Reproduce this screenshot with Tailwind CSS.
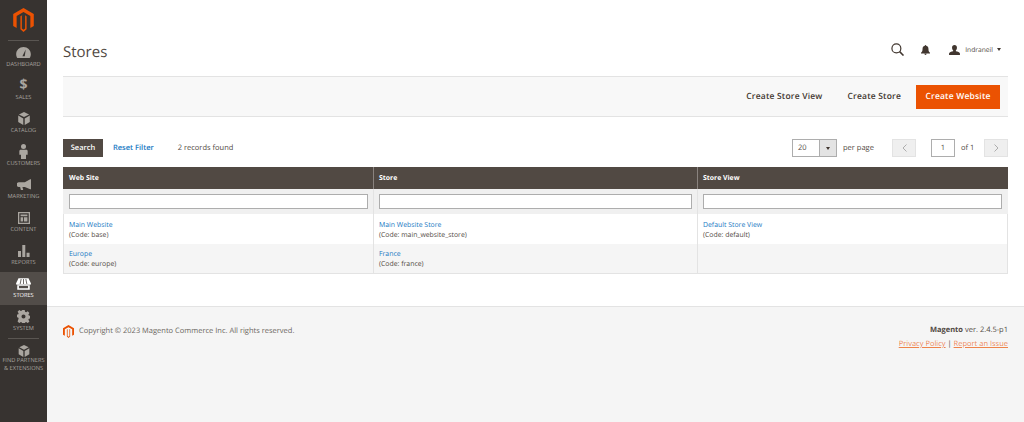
<!DOCTYPE html>
<html lang="en">
<head>
    <meta charset="UTF-8">
    <title>Stores</title>
    <script src="https://cdn.jsdelivr.net/npm/@tailwindcss/browser@4"></script>
</head>
<body class="bg-white font-['Open_Sans',sans-serif] [text-rendering:geometricPrecision] text-[#514943] overflow-hidden">
<div class="flex h-[422px] w-[1024px]">
    <!-- Sidebar -->
    <aside class="w-[47px] shrink-0 bg-[#373330] text-[#aaa6a0] text-[5.700px] leading-[8px] uppercase text-center">
        <div class="h-[41px] flex items-center justify-center border-b border-[#5a5652] mx-[8px]">
            <svg class="w-[21px] h-[24px]" viewBox="0 0 24 28"><path fill="#eb5202" d="M12 0 0 7v14l4 2.300V9.300L12 4.600l8 4.700v14l4-2.300V7z"/><path fill="#eb5202" d="M12 7.500 8.400 9.600v15.200L12 28l3.600-3.200V9.600l-1.700-1V24L12 25.400 10.100 24V8.600z"/></svg>
        </div>
        <nav class="flex flex-col">
            <a class="h-[33px] flex flex-col items-center justify-end pb-[6px]">
                <svg class="w-[15px] h-[11px] mb-[2px]" viewBox="0 0 20 15"><path fill="#aaa6a0" d="M10 0C4.500 0 0 4.300 0 9.800c0 2 .6 3.800 1.600 5.200h16.800c1-1.400 1.600-3.200 1.600-5.200C20 4.300 15.500 0 10 0zm1.700 12.500H8.500L13 3.500z"/></svg>
                <span>Dashboard</span>
            </a>
            <a class="h-[33px] flex flex-col items-center justify-end pb-[6px]">
                <span class="text-[14px] leading-[12px] font-bold mb-[2px]">$</span>
                <span>Sales</span>
            </a>
            <a class="h-[33px] flex flex-col items-center justify-end pb-[6px]">
                <svg class="w-[12px] h-[13px] mb-[1px]" viewBox="0 0 16 18"><path fill="#aaa6a0" d="M8 0 1 3.500l7 3.500 7-3.500zM0 5v9l7 4V9zm16 0-7 4v9l7-4z"/></svg>
                <span>Catalog</span>
            </a>
            <a class="h-[33px] flex flex-col items-center justify-end pb-[6px]">
                <svg class="w-[9px] h-[15px]" viewBox="0 0 10 18"><circle cx="5" cy="3" r="3" fill="#aaa6a0"/><path fill="#aaa6a0" d="M1 7h8l1 1v5H8v5H2v-5H0V8z"/></svg>
                <span>Customers</span>
            </a>
            <a class="h-[33px] flex flex-col items-center justify-end pb-[6px]">
                <svg class="w-[14px] h-[12px] mb-[1px]" viewBox="0 0 18 15"><path fill="#aaa6a0" d="M18 0v13l-1 0-7-3H7l1 4H5L4 10H2L0 9V5l2-1h8l7-4z"/></svg>
                <span>Marketing</span>
            </a>
            <a class="h-[33px] flex flex-col items-center justify-end pb-[6px]">
                <svg class="w-[12px] h-[12px] mb-[1px]" viewBox="0 0 14 14"><path fill="#aaa6a0" fill-rule="evenodd" d="M0 0h14v14H0zm1.500 1.500v11h11v-11zM3 3h8v2H3zm0 3h3v5H3zm4 0h4v5H7z"/></svg>
                <span>Content</span>
            </a>
            <a class="h-[33px] flex flex-col items-center justify-end pb-[6px]">
                <svg class="w-[12px] h-[12px] mb-[1px]" viewBox="0 0 14 14"><path fill="#aaa6a0" d="M0 7h3.500v7H0zM5 0h3.500v14H5zm5 9h3.500v5H10z"/></svg>
                <span>Reports</span>
            </a>
            <a class="h-[33px] flex flex-col items-center justify-end pb-[6px] bg-[#524d49] text-white">
                <svg class="w-[15px] h-[12px] mb-[1px]" viewBox="0 0 18 14">
                    <path fill="#fff" d="M3 0h12l3 6.500c0 1-.7 1.500-1.500 1.500h-15C.7 8 0 7.500 0 6.500z"/>
                    <path fill="none" stroke="#524d49" stroke-width="1" d="M6.200 1 5 7M9 1v6M11.800 1 13 7"/>
                    <path fill="#fff" fill-rule="evenodd" d="M1.500 8.500h15V14h-15zm2 1v2.500h11V9.500z"/>
                </svg>
                <span>Stores</span>
            </a>
            <a class="h-[33px] flex flex-col items-center justify-end pb-[6px]">
                <svg class="w-[13px] h-[13px] mb-[1px]" viewBox="0 0 16 16"><path fill="#aaa6a0" fill-rule="evenodd" d="M6.500 0h3l.4 2.200 1.400.6 1.900-1.300 2.100 2.100-1.300 1.900.6 1.400 2.200.4v3l-2.200.4-.6 1.400 1.300 1.900-2.100 2.100-1.900-1.300-1.400.6-.4 2.200h-3l-.4-2.200-1.400-.6-1.900 1.300-2.100-2.100L2 10.600l-.6-1.400L-.8 8.800v-3l2.200-.4.600-1.400L.7 2.100 2.800 0l1.900 1.300 1.400-.6zM8 5.500a2.500 2.500 0 1 0 0 5 2.500 2.500 0 0 0 0-5z"/></svg>
                <span>System</span>
            </a>
            <div class="mx-[8px] border-t border-[#5a5652]"></div>
            <a class="flex flex-col items-center pt-[6px] whitespace-nowrap leading-[7.500px]">
                <svg class="w-[12px] h-[12px]" viewBox="0 0 16 18"><path fill="#aaa6a0" d="M8 0 1 3.500l7 3.500 7-3.500zM0 5v9l7 4V9zm16 0-7 4v9l7-4z"/></svg>
                <span>Find Partners</span>
                <span>&amp; Extensions</span>
            </a>
        </nav>
    </aside>

    <!-- Main -->
    <div class="flex-1 flex flex-col min-w-0">
        <div class="px-[16px] flex-1">
            <!-- Header -->
            <header class="h-[76px] flex items-center justify-between pt-[28px] pr-[7px]">
                <h1 class="text-[15px] leading-[20px] font-normal">Stores</h1>
                <div class="flex items-center -mt-[5px] text-[6.700px]">
                    <svg class="w-[13px] h-[13px]" viewBox="0 0 14 14" fill="none" stroke="#41362f" stroke-width="1.300"><circle cx="5.800" cy="5.800" r="4.800"/><path d="m9.300 9.300 4.200 4.200" stroke-width="1.700"/></svg>
                    <svg class="w-[9px] h-[10px] ml-[17px]" viewBox="0 0 10 11"><path fill="#41362f" d="M5 0c.5 0 .8.300.8.800C7.500 1.200 8.300 2.500 8.300 4.500c0 2 .4 3 1.700 4v.8H0v-.8c1.300-1 1.700-2 1.700-4C1.700 2.500 2.500 1.200 4.200.8 4.200.3 4.500 0 5 0zM3.800 9.800h2.400C6.200 10.500 5.700 11 5 11s-1.200-.5-1.200-1.200z"/></svg>
                    <svg class="w-[11px] h-[10px] ml-[19px]" viewBox="0 0 12 11"><path fill="#41362f" d="M6 0c1.700 0 2.700 1.200 2.700 2.900 0 1.200-.5 2.300-1.200 2.900v1c1.800.5 4.500 1.100 4.500 2.500V11H0V9.300c0-1.400 2.700-2 4.500-2.500v-1C3.800 5.200 3.300 4.100 3.300 2.900 3.300 1.200 4.300 0 6 0z"/></svg>
                    <span class="ml-[5px] pt-[2px]">Indraneil</span>
                    <span class="ml-[4px] w-0 h-0 border-x-[2.500px] border-x-transparent border-t-[3px] border-t-[#41362f]"></span>
                </div>
            </header>

            <!-- Page actions -->
            <div class="h-[41px] bg-[#f8f8f8] border-y border-[#e3e3e3] flex items-center justify-end pr-[8px] gap-[25px] text-[8.500px] font-semibold tracking-[0.2px] text-[#41362f]">
                <span class="pt-[2px]">Create Store View</span>
                <span class="pt-[2px]">Create Store</span>
                <span class="w-[84px] h-[24px] -ml-[10px] pt-[2px] bg-[#eb5202] text-white flex items-center justify-center">Create Website</span>
            </div>

            <!-- Grid toolbar -->
            <div class="h-[18px] mt-[22px] flex items-center text-[7.500px]">
                <span class="w-[40px] h-[18px] pt-[2px] bg-[#514943] text-white font-semibold flex items-center justify-center">Search</span>
                <span class="ml-[10px] pt-[2px] text-[#1979c3] font-semibold">Reset Filter</span>
                <span class="ml-[24px] pt-[2px]">2 records found</span>
                <div class="ml-auto flex items-center">
                    <div class="w-[45px] h-[18px] flex border border-[#adadad] bg-white">
                        <span class="flex-1 pl-[5px] leading-[17px]">20</span>
                        <span class="w-[17px] bg-[#e3e3e3] border-l border-[#adadad] flex items-center justify-center"><span class="w-0 h-0 border-x-[2.500px] border-x-transparent border-t-[3px] border-t-[#41362f]"></span></span>
                    </div>
                    <span class="w-[55px] pl-[6px] pt-[2px]">per page</span>
                    <span class="w-[24px] h-[18px] bg-[#efefef] border border-[#e3e3e3] flex items-center justify-center">
                        <svg class="w-[5px] h-[8px]" viewBox="0 0 5 8" fill="none" stroke="#adadad" stroke-width="1"><path d="M4.500.5 1 4l3.500 3.500"/></svg>
                    </span>
                    <span class="ml-[15px] w-[24px] h-[18px] border border-[#adadad] bg-white text-center leading-[17px]">1</span>
                    <span class="w-[29px] pl-[6px] pt-[2px]">of 1</span>
                    <span class="w-[24px] h-[18px] bg-[#efefef] border border-[#e3e3e3] flex items-center justify-center">
                        <svg class="w-[5px] h-[8px]" viewBox="0 0 5 8" fill="none" stroke="#adadad" stroke-width="1"><path d="M.5.5 4 4 .5 7.500"/></svg>
                    </span>
                </div>
            </div>

            <!-- Table -->
            <div class="mt-[10px] grid grid-cols-[310px_324px_311px] text-[6.900px] leading-[9.500px]">
                <div class="h-[22px] bg-[#514943] text-white font-bold flex items-center pl-[6px] pt-[1px]">Web Site</div>
                <div class="h-[22px] bg-[#514943] text-white font-bold flex items-center pl-[5px] pt-[1px] border-l border-[#8a837f]">Store</div>
                <div class="h-[22px] bg-[#514943] text-white font-bold flex items-center pl-[5px] pt-[1px] border-l border-[#8a837f]">Store View</div>

                <div class="h-[25px] bg-[#f0f0f0] flex items-center pl-[6px] pr-[5px]"><div class="w-full h-[15px] bg-white border border-[#adadad]"></div></div>
                <div class="h-[25px] bg-[#f0f0f0] flex items-center pl-[5px] pr-[5px] border-l border-[#e3e3e3]"><div class="w-full h-[15px] bg-white border border-[#adadad]"></div></div>
                <div class="h-[25px] bg-[#f0f0f0] flex items-center pl-[5px] pr-[6px] border-l border-[#e3e3e3]"><div class="w-full h-[15px] bg-white border border-[#adadad]"></div></div>

                <div class="h-[30px] pl-[5px] pt-[7px] border-l border-[#e3e3e3]"><a class="block text-[#1979c3]">Main Website</a>(Code: base)</div>
                <div class="h-[30px] pl-[5px] pt-[7px] border-l border-[#e3e3e3]"><a class="block text-[#1979c3]">Main Website Store</a>(Code: main_website_store)</div>
                <div class="h-[30px] pl-[5px] pt-[7px] border-x border-[#e3e3e3]"><a class="block text-[#1979c3]">Default Store View</a>(Code: default)</div>

                <div class="h-[30px] pl-[5px] pt-[6px] bg-[#f5f5f5] border-l border-b border-[#e3e3e3]"><a class="block text-[#1979c3]">Europe</a>(Code: europe)</div>
                <div class="h-[30px] pl-[5px] pt-[6px] bg-[#f5f5f5] border-l border-b border-[#e3e3e3]"><a class="block text-[#1979c3]">France</a>(Code: france)</div>
                <div class="h-[30px] bg-[#f5f5f5] border-x border-b border-[#e3e3e3]"></div>
            </div>
        </div>

        <!-- Footer -->
        <footer class="h-[116px] bg-[#f5f5f5] border-t border-[#e3e3e3] px-[16px] pt-[17px] flex justify-between text-[7.500px] leading-[13px]">
            <div class="flex items-center h-[14px]">
                <svg class="w-[11px] h-[13px] mr-[5px]" viewBox="0 0 24 28"><path fill="#eb5202" d="M12 0 0 7v14l4 2.300V9.300L12 4.600l8 4.700v14l4-2.300V7z"/><path fill="#eb5202" d="M12 7.500 8.400 9.600v15.200L12 28l3.600-3.200V9.600l-1.700-1V24L12 25.400 10.100 24V8.600z"/></svg>
                <span class="text-[#6b6560]">Copyright © 2023 Magento Commerce Inc. All rights reserved.</span>
            </div>
            <div class="text-right">
                <p><b class="font-bold">Magento</b> ver. 2.4.5-p1</p>
                <p class="mt-[1px]"><a class="underline text-[#eb5202]/70">Privacy Policy</a> | <a class="underline text-[#eb5202]/70">Report an Issue</a></p>
            </div>
        </footer>
    </div>
</div>
</body>
</html>
